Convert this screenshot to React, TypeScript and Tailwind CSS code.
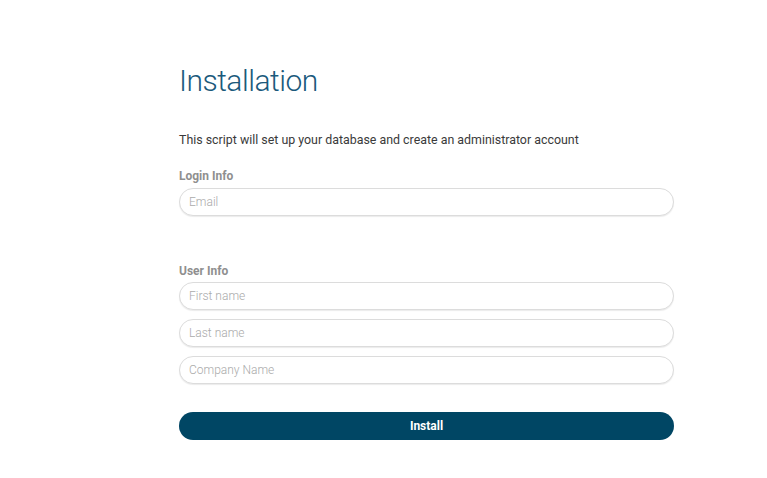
import React from 'react'

const inputClass =
  'w-full h-7 rounded-full border border-[#dcdcdc] bg-white px-[9px] text-[12px] font-light text-[#555] placeholder:text-[#aaa] shadow-[0_1px_1px_rgba(0,0,0,0.08)] outline-none'

export default function App() {
  return (
    <div className="min-h-screen bg-white font-['Roboto',sans-serif]">
      <div className="ml-[179px] w-[495px] pt-[63px]">
        <h1 className="text-[30px] leading-[36px] font-light tracking-[-0.5px] text-[#1b5a7c]">Installation</h1>

        <p className="mt-[33px] text-[12.4px] leading-[16px] text-[#3a3a3a]">
          This script will set up your database and create an administrator account
        </p>

        <form className="mt-[21px]">
          <label className="block text-[12px] leading-[14px] font-bold text-[#8f8f8f]">Login Info</label>
          <div className="mt-[5px]">
            <input className={inputClass} placeholder="Email" />
          </div>

          <label className="mt-[48px] block text-[12px] leading-[14px] font-bold text-[#8f8f8f]">User Info</label>
          <div className="mt-[4px] flex flex-col gap-[9px]">
            <input className={inputClass} placeholder="First name" />
            <input className={inputClass} placeholder="Last name" />
            <input className={inputClass} placeholder="Company Name" />
          </div>

          <button
            type="button"
            className="mt-[28px] h-7 w-full rounded-full bg-[#004664] text-[12px] font-bold text-white"
          >
            Install
          </button>
        </form>
      </div>
    </div>
  )
}
